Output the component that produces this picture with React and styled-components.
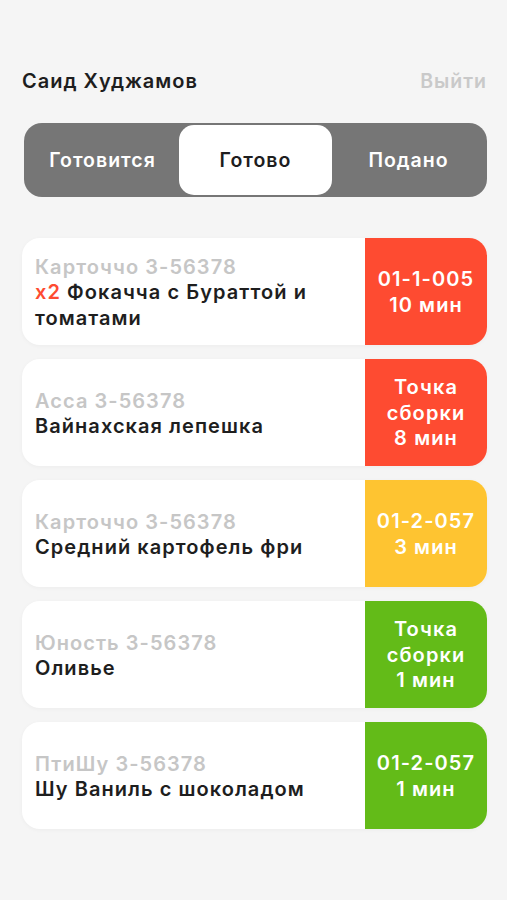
import styled, { createGlobalStyle } from "styled-components";

const orders = [
  { place: "Карточчо 3-56378", qty: 2, name: "Фокачча с Бураттой и томатами", slot: "01-1-005", time: "10 мин", tone: "red" },
  { place: "Асса 3-56378", name: "Вайнахская лепешка", slot: "Точка сборки", time: "8 мин", tone: "red" },
  { place: "Карточчо 3-56378", name: "Средний картофель фри", slot: "01-2-057", time: "3 мин", tone: "yellow" },
  { place: "Юность 3-56378", name: "Оливье", slot: "Точка сборки", time: "1 мин", tone: "green" },
  { place: "ПтиШу 3-56378", name: "Шу Ваниль с шоколадом", slot: "01-2-057", time: "1 мин", tone: "green" },
];

const tabs = ["Готовится", "Готово", "Подано"];

const tones = {
  red: "#fe4b31",
  yellow: "#fec431",
  green: "#63bb18",
};

const App = () => {
  return (
    <>
      <Global />
      <Screen>
        <Header>
          <UserName>Саид Худжамов</UserName>
          <Logout>Выйти</Logout>
        </Header>

        <Segments>
          {tabs.map((t, i) => (
            <Segment key={t} active={i === 1}>
              {t}
            </Segment>
          ))}
        </Segments>

        <List>
          {orders.map((o, i) => (
            <Card key={i}>
              <Info>
                <Place>{o.place}</Place>
                <Dish>
                  {o.qty && <Qty>x{o.qty} </Qty>}
                  {o.name}
                </Dish>
              </Info>
              <Status tone={o.tone}>
                <StatusText>
                  {o.slot}
                  <br />
                  {o.time}
                </StatusText>
              </Status>
            </Card>
          ))}
        </List>
      </Screen>
    </>
  );
};

const Global = createGlobalStyle`
  body {
    margin: 0;
    background: #f5f5f5;
    font-family: Inter, "Noto Sans", sans-serif;
  }
`;

const Screen = styled.div`
  min-height: 900px;
  padding: 67px 20px 0 22px;
  box-sizing: border-box;
`;

const Header = styled.div`
  display: flex;
  justify-content: space-between;
  align-items: center;
  height: 28px;
`;

const UserName = styled.div`
  font-size: 20px;
  font-weight: 600;
  color: #1e1e1e;
  letter-spacing: 1px;
`;

const Logout = styled.div`
  font-size: 19.5px;
  font-weight: 600;
  color: #c9c9c9;
  letter-spacing: 1px;
`;

const Segments = styled.div`
  display: grid;
  grid-template-columns: 1fr 1fr 1fr;
  margin: 28px 0 0 2px;
  height: 74px;
  padding: 2px;
  box-sizing: border-box;
  background: #767676;
  border-radius: 18px;
`;

const Segment = styled.div`
  display: flex;
  align-items: center;
  justify-content: center;
  font-size: 19.5px;
  font-weight: 600;
  letter-spacing: 1px;
  border-radius: 15px;
  color: ${({ active }) => (active ? "#1e1e1e" : "#ffffff")};
  background: ${({ active }) => (active ? "#ffffff" : "transparent")};
`;

const List = styled.div`
  display: flex;
  flex-direction: column;
  gap: 14px;
  margin-top: 41px;
`;

const Card = styled.div`
  display: flex;
  height: 107px;
  background: #ffffff;
  border-radius: 18px;
  overflow: hidden;
  box-shadow: 0 1px 4px rgba(0, 0, 0, 0.04);
`;

const Info = styled.div`
  flex: 1;
  display: flex;
  flex-direction: column;
  justify-content: center;
  padding: 3px 13px 0;
  font-size: 20px;
  font-weight: 600;
  letter-spacing: 1.05px;
  line-height: 25.5px;
`;

const Place = styled.div`
  color: #c6c6c6;
`;

const Dish = styled.div`
  color: #1e1e1e;
`;

const Qty = styled.span`
  color: #fe4b31;
`;

const Status = styled.div`
  width: 122px;
  flex-shrink: 0;
  display: flex;
  align-items: center;
  justify-content: center;
  padding-top: 2px;
  background: ${({ tone }) => tones[tone]};
`;

const StatusText = styled.div`
  color: #ffffff;
  font-size: 20px;
  font-weight: 600;
  letter-spacing: 1.1px;
  line-height: 25.5px;
  text-align: center;
  padding: 0 4px;
`;

export default App;
